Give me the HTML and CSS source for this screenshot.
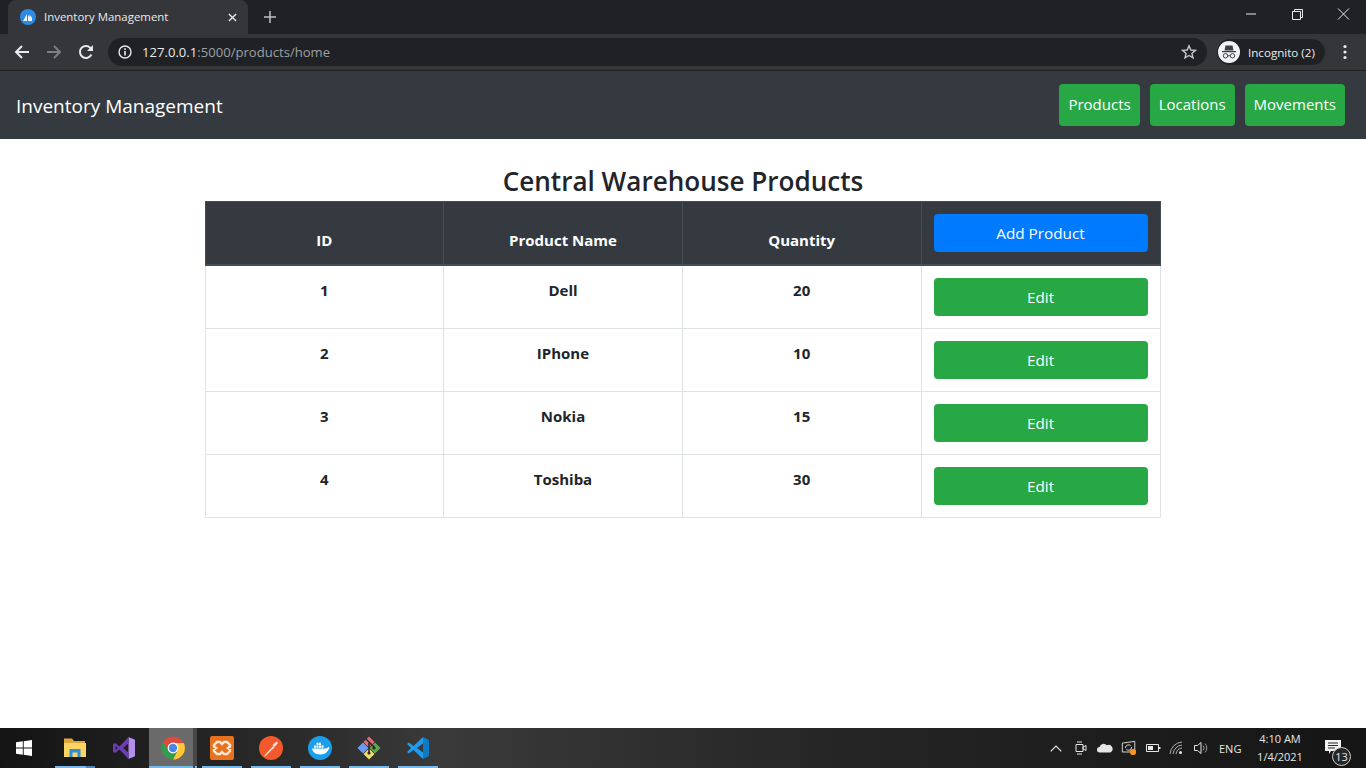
FILE: index.html
```html
<!DOCTYPE html>
<html lang="en">
<head>
<meta charset="utf-8">
<title>Inventory Management</title>
<link rel="stylesheet" href="styles.css">
</head>
<body>
<div class="screen">
  <header class="chrome">
    <div class="tabstrip">
      <div class="tab">
        <svg class="favicon" viewBox="0 0 16 16"><circle cx="8" cy="8" r="8" fill="#2b8ae6"/><path d="M3 12 7 5v7zM8 12V6l1.500 2V5l1 3V6l1.500 3v3z" fill="#e8f3fc"/></svg>
        <span class="tab-title">Inventory Management</span>
        <svg class="tab-x" viewBox="0 0 10 10"><path d="M1 1l8 8M9 1l-8 8" stroke="#e8eaed" stroke-width="1.500"/></svg>
      </div>
      <svg class="tab-new" viewBox="0 0 12 12"><path d="M6 0v12M0 6h12" stroke="#bdc1c6" stroke-width="1.500"/></svg>
      <div class="win-controls">
        <svg class="win-ic" viewBox="0 0 46 20"><path d="M18 10h10" stroke="#e8eaed"/></svg>
        <svg class="win-ic" viewBox="0 0 46 20"><path d="M18.500 7.500h8v8h-8zM20.500 7.500v-2h8v8h-2" fill="none" stroke="#e8eaed"/></svg>
        <svg class="win-ic" viewBox="0 0 46 20"><path d="M18 4.500l11 11M29 4.500l-11 11" stroke="#e8eaed"/></svg>
      </div>
    </div>
    <div class="toolbar">
      <svg class="tb-ic" viewBox="0 0 16 16"><path d="M15 8H2M8 2 2 8l6 6" fill="none" stroke="#e8eaed" stroke-width="2"/></svg>
      <svg class="tb-ic" viewBox="0 0 16 16"><path d="M1 8h13M8 2l6 6-6 6" fill="none" stroke="#7c7f83" stroke-width="2"/></svg>
      <svg class="tb-ic" viewBox="0 0 16 16"><path d="M13.400 10.500A6 6 0 1 1 12.200 3.700L14 5.500" fill="none" stroke="#e8eaed" stroke-width="2"/><path d="M15 1v6H9z" fill="#e8eaed"/></svg>
      <div class="omnibox">
        <svg class="info" viewBox="0 0 14 14"><circle cx="7" cy="7" r="6" fill="none" stroke="#e8eaed" stroke-width="1.400"/><path d="M6.200 6h1.600v4.500H6.200zM6.200 3.300h1.600v1.600H6.200z" fill="#e8eaed"/></svg>
        <span class="url"><span class="url-host">127.0.0.1</span>:5000/products/home</span>
        <svg class="star" viewBox="0 0 16 16"><path d="M8 1.800l1.800 4.200 4.600.4-3.500 3 1.100 4.500L8 11.500l-4 2.400 1.100-4.500-3.500-3 4.600-.4z" fill="none" stroke="#c4c7ca" stroke-width="1.400"/></svg>
      </div>
      <div class="profile">
        <svg class="avatar" viewBox="0 0 22 22"><circle cx="11" cy="11" r="11" fill="#f1f3f4"/><path d="M7.500 4.500h7l1 5h-9zM4 10h14v1.200H4z" fill="#3c4043"/><circle cx="7.500" cy="14.800" r="2.200" fill="none" stroke="#3c4043"/><circle cx="14.500" cy="14.800" r="2.200" fill="none" stroke="#3c4043"/><path d="M9.700 14.800h2.600" stroke="#3c4043"/></svg>
        <span>Incognito (2)</span>
      </div>
      <svg class="kebab" viewBox="0 0 4 16"><circle cx="2" cy="2.500" r="1.600" fill="#e8eaed"/><circle cx="2" cy="8" r="1.600" fill="#e8eaed"/><circle cx="2" cy="13.500" r="1.600" fill="#e8eaed"/></svg>
    </div>
  </header>

  <nav class="navbar">
    <a class="brand">Inventory Management</a>
    <div class="nav-actions">
      <a class="btn btn-green">Products</a>
      <a class="btn btn-green">Locations</a>
      <a class="btn btn-green">Movements</a>
    </div>
  </nav>

  <main class="content">
    <h2 class="title">Central Warehouse Products</h2>
    <table class="grid">
      <thead>
        <tr><th>ID</th><th>Product Name</th><th>Quantity</th><th class="action"><a class="btn btn-blue btn-full">Add Product</a></th></tr>
      </thead>
      <tbody>
        <tr><td>1</td><td>Dell</td><td>20</td><td class="action"><a class="btn btn-green btn-full">Edit</a></td></tr>
        <tr><td>2</td><td>IPhone</td><td>10</td><td class="action"><a class="btn btn-green btn-full">Edit</a></td></tr>
        <tr><td>3</td><td>Nokia</td><td>15</td><td class="action"><a class="btn btn-green btn-full">Edit</a></td></tr>
        <tr><td>4</td><td>Toshiba</td><td>30</td><td class="action"><a class="btn btn-green btn-full">Edit</a></td></tr>
      </tbody>
    </table>
  </main>

  <footer class="taskbar">
    <svg class="start" viewBox="0 0 16 16"><path d="M0 2.300 6.800 1.300V7.500H0zM7.700 1.200 16 0V7.500H7.700zM0 8.500H6.800V14.700L0 13.700zM7.700 8.500H16V16L7.700 14.800z" fill="#fff"/></svg>
    <div class="apps">
      <div class="app app-open app-stack">
        <svg viewBox="0 0 24 24"><path d="M1 6V2.500h8L11 5h11v3H1z" fill="#dfa63a"/><path d="M1 7h22v14H1z" fill="#fcd462"/><path d="M6.500 21v-8h11v8h-3v-4.500h-5V21z" fill="#2e8fdc"/></svg>
      </div>
      <div class="app">
        <svg viewBox="0 0 24 24"><path d="M16.500 1 23 3.700v16.600L16.500 23z" fill="#b48fea"/><path d="M16.500 1 7.500 10.500 3.200 7 1 8.300v7.400L3.200 17l4.300-3.500 9 9.500v-6.300l-5.300-4.700 5.300-4.700zM3.500 10v4l2.200-2z" fill="#6c3db3" fill-rule="evenodd"/></svg>
      </div>
      <div class="app app-open app-active">
        <svg viewBox="0 0 24 24"><circle cx="12" cy="12" r="11.500" fill="#dd4b3e"/><path d="M12 7h10.800A11.500 11.500 0 0 1 12 23.500L16.500 14.500z" fill="#fcc934"/><path d="M2.200 6 7.500 14.500 12 12l4.500 2.500L12 23.500A11.500 11.500 0 0 1 2.200 6z" fill="#2f9e4f"/><circle cx="12" cy="12" r="5.400" fill="#fff"/><circle cx="12" cy="12" r="4.200" fill="#4a86e8"/></svg>
      </div>
      <div class="app app-open">
        <svg viewBox="0 0 24 24"><rect width="24" height="24" rx="2" fill="#e8711f"/><path d="M7 6h3l2 2 2-2h3l3 3v1.500L18 12l2 1.500V15l-3 3h-3l-2-2-2 2H7l-3-3v-1.500L6 12l-2-1.500V9z" fill="none" stroke="#fde9da" stroke-width="2.400"/></svg>
      </div>
      <div class="app app-open">
        <svg viewBox="0 0 24 24"><circle cx="12" cy="12" r="12" fill="#f4592b"/><path d="M5 20l9-10 1.500 1.500L6 20.500zM13.500 9l4-3.500 1.500 1.500-3.500 4z" fill="#fde3d8"/></svg>
      </div>
      <div class="app app-open">
        <svg viewBox="0 0 24 24"><circle cx="12" cy="12" r="12" fill="#1c9eeb"/><path d="M4 12.500h14c1 0 1.800-.7 2.300-1.700 1 .3 1.200 1 .7 1.700-1 3-4 6-8.500 6C7 18.500 4.500 15.500 4 12.500z" fill="#fff"/><path d="M6 9.500h2v2.300H6zM8.500 9.500h2v2.300h-2zM11 9.500h2v2.300h-2zM13.500 9.500h2v2.300h-2zM11 6.700h2V9h-2zM8.500 6.700h2V9h-2z" fill="#fff"/></svg>
      </div>
      <div class="app app-open">
        <svg viewBox="0 0 24 24"><path d="M6 6.500l5.500 5.500L6 17.500.5 12z" fill="#6a9bf0"/><path d="M12.500 12 18 6.500l5.500 5.500-5.500 5.500z" fill="#5fa84a"/><path d="M6.500 18l5.500-5.500 5.500 5.500-5.500 5.500z" fill="#f2dc6b"/><path d="M6.500 6 12 .5 17.500 6 12 11.500z" fill="#e56a72"/><path d="M9 3l9 9M12 7v10" stroke="#2a2a2d" stroke-width="1.600"/><circle cx="12" cy="17" r="1.600" fill="#2a2a2d"/><circle cx="17" cy="12" r="1.600" fill="#2a2a2d"/></svg>
      </div>
      <div class="app app-open">
        <svg viewBox="0 0 24 24"><path d="M17 1l6 3v16l-6 3z" fill="#0e7ac4"/><path d="M17 1 7.500 10 3 6.500 1 8l4 4-4 4 2 1.500L7.500 14l9.500 9v-6.500L11 12l6-4.500z" fill="#1f9cf0"/></svg>
      </div>
    </div>
    <div class="tray">
      <svg class="tr-chev" viewBox="0 0 12 7"><path d="M.7 6.300 6 1l5.300 5.300" fill="none" stroke="#e6e6e6" stroke-width="1.200"/></svg>
      <svg class="tr-ic" viewBox="0 0 16 16"><path d="M3 4.500h7v7H3zM10 7l3-1.500v5L10 9zM4 2h5M4 14h5" fill="none" stroke="#e6e6e6"/></svg>
      <svg class="tr-ic" viewBox="0 0 18 16"><path d="M3 13a3 3 0 0 1 0-6 4.500 4.500 0 0 1 8-2 4 4 0 0 1 4 8z" fill="#e6e6e6"/></svg>
      <svg class="tr-ic tr-alert" viewBox="0 0 18 18"><path d="M1.500 3.500l14-2v12h-14z" fill="none" stroke="#e6e6e6"/><path d="M5 9a3.500 3.500 0 0 1 6-2.500M12 8a3.500 3.500 0 0 1-6 2.500" fill="none" stroke="#e6e6e6"/><circle cx="13.500" cy="13.500" r="3.500" fill="#f7941d"/></svg>
      <svg class="tr-ic" viewBox="0 0 16 16"><path d="M1.500 4.500h12v7h-12z" fill="none" stroke="#e6e6e6"/><path d="M3 6h5v4H3z" fill="#e6e6e6"/><path d="M14 7h1.500v2H14z" fill="#e6e6e6"/></svg>
      <svg class="tr-ic" viewBox="0 0 16 16"><path d="M1 14A13 13 0 0 1 13 2M4 14a10 10 0 0 1 9-9M7 14a7 7 0 0 1 6-6" fill="none" stroke="#b0b0b0"/><circle cx="11.500" cy="12.500" r="1.500" fill="#e6e6e6"/></svg>
      <svg class="tr-ic" viewBox="0 0 16 16"><path d="M1.500 5.500h3l3.500-3v11l-3.500-3h-3z" fill="none" stroke="#e6e6e6"/><path d="M10 5.500a3.500 3.500 0 0 1 0 5M12 3.500a6.500 6.500 0 0 1 0 9" fill="none" stroke="#9a9a9a"/></svg>
      <span class="lang">ENG</span>
      <div class="clock"><span>4:10 AM</span><span>1/4/2021</span></div>
      <div class="notif">
        <svg class="notif-ic" viewBox="0 0 16 14"><path d="M0 0h16v11H6l-2 3v-3H0z" fill="#f2f2f2"/><path d="M3 3h10M3 5.500h10M3 8h7" stroke="#26262a"/></svg>
        <span class="notif-count">13</span>
      </div>
    </div>
  </footer>
</div>
</body>
</html>
```
FILE: styles.css
```css
* { box-sizing: border-box; }
html, body { margin: 0; padding: 0; height: 100%; overflow: hidden; background: #fff; }
body { font-family: "Open Sans", "Noto Sans", "Liberation Sans", sans-serif; color: #212529; }
.screen { width: 1366px; height: 768px; display: flex; flex-direction: column; }

.chrome { height: 71px; flex: none; background: #35363a; border-bottom: 1px solid #1f2023; }
.tabstrip { height: 34px; background: #202124; display: flex; align-items: center; padding-left: 8px; position: relative; }
.tab { width: 240px; height: 34px; background: #35363a; border-radius: 8px 8px 0 0; display: flex; align-items: center; padding: 0 12px; }
.favicon { width: 16px; height: 16px; flex: none; }
.tab-title { margin-left: 8px; margin-bottom: 2px; font-size: 11.45px; color: #e8eaed; flex: 1; white-space: nowrap; }
.tab-x { width: 9px; height: 9px; margin-right: -1px; }
.tab-new { width: 12px; height: 12px; margin-left: 16px; }
.win-controls { margin-left: auto; display: flex; align-self: flex-start; padding-top: 4px; }
.win-ic { width: 46px; height: 20px; display: block; }

.toolbar { height: 36px; display: flex; align-items: center; padding-left: 14px; }
.tb-ic { width: 16px; height: 16px; margin-right: 16px; flex: none; }
.tb-ic:nth-child(3) { margin-right: 14px; }
.omnibox { width: 1099px; height: 28px; background: #202124; border-radius: 14px; display: flex; align-items: center; padding: 0 10px; }
.info { width: 14px; height: 14px; flex: none; }
.url { margin-left: 10px; font-size: 13.1px; color: #9aa0a6; flex: 1; white-space: nowrap; }
.url-host { color: #e8eaed; }
.star { width: 16px; height: 16px; }
.profile { margin-left: 10px; width: 108px; height: 26px; background: #202124; border-radius: 13px; display: flex; align-items: center; padding-left: 1px; font-size: 11.6px; color: #e8eaed; white-space: nowrap; }
.avatar { width: 22px; height: 22px; margin-right: 8px; flex: none; }
.kebab { width: 4px; height: 16px; margin-left: 18px; }

.navbar { height: 68px; flex: none; background: #343a40; display: flex; align-items: center; justify-content: space-between; padding: 0 21px 0 16px; }
.brand { font-size: 19px; margin-top: 1px; color: #fff; white-space: nowrap; }
.nav-actions { display: flex; gap: 10px; margin-top: -1px; }
.btn { display: block; height: 42px; line-height: 41px; padding: 0 9px; border-radius: 4px; font-size: 15px; color: #fff; text-align: center; white-space: nowrap; }
.btn-green { background: #28a745; }
.btn-blue { background: #007bff; }
.btn-full { height: 38px; line-height: 38px; width: 100%; padding: 0; font-size: 15.3px; font-weight: 400; }

.content { flex: 1; display: flex; flex-direction: column; align-items: center; padding-top: 23px; }
.title { margin: 0; font-size: 26.1px; line-height: 39px; font-weight: 600; white-space: nowrap; }
.grid { width: 956px; border-collapse: collapse; table-layout: fixed; margin-right: 1px; font-size: 15px; text-align: center; }
.grid th, .grid td { padding: 12px; vertical-align: top; border: 1px solid #dee2e6; font-weight: 700; }
.grid td { height: 63px; line-height: 24px; }
.grid th { height: 63px; background: #343a40; color: #fff; border: 1px solid #454d55; border-bottom-width: 2px; vertical-align: bottom; line-height: 24px; }
.grid th.action { vertical-align: top; }
.grid .action { width: 239px; }

.taskbar { height: 40px; flex: none; background: linear-gradient(90deg, #141414 0%, #2b2b2b 22%, #3a3a3a 32%, #262626 60%, #151515 100%); display: flex; align-items: center; color: #e6e6e6; }
.start { width: 16px; height: 16px; margin-left: 16px; flex: none; }
.apps { display: flex; margin-left: 19px; height: 40px; }
.app { width: 49px; height: 40px; padding-right: 2px; display: flex; align-items: center; justify-content: center; position: relative; }
.app svg { width: 24px; height: 24px; }
.app-open::after { content: ""; position: absolute; left: 4px; right: 5px; bottom: 0; height: 2px; background: #76b9ed; }
.app-stack::after { background: linear-gradient(90deg, #76b9ed 31px, #4d86b0 31px); }
.app-active { background: linear-gradient(90deg, #6a6a6a 44px, #474747 44px, #474747 48px, transparent 48px); }
.app-active::after { left: 0; right: 1px; background: linear-gradient(90deg, #76b9ed 44px, transparent 44px, transparent 46px, #76b9ed 46px); }
.tray { margin-left: auto; display: flex; align-items: center; height: 40px; }
.tr-chev { width: 12px; height: 7px; margin-right: 11px; }
.tr-ic { width: 16px; height: 16px; margin-right: 8px; flex: none; }
.lang { font-size: 11px; margin-left: 2px; width: 23px; white-space: nowrap; }
.clock { display: flex; flex-direction: column; align-items: center; font-size: 11px; line-height: 18px; margin-left: 13px; width: 50px; white-space: nowrap; }
.notif { width: 41px; height: 40px; margin-left: 20px; position: relative; }
.notif-ic { position: absolute; left: 0; top: 12px; width: 16px; height: 14px; }
.notif-count { position: absolute; left: 7px; top: 19px; width: 19px; height: 19px; border-radius: 50%; border: 1px solid #cfcfcf; background: #262626; font-size: 11px; line-height: 17px; text-align: center; }
```
